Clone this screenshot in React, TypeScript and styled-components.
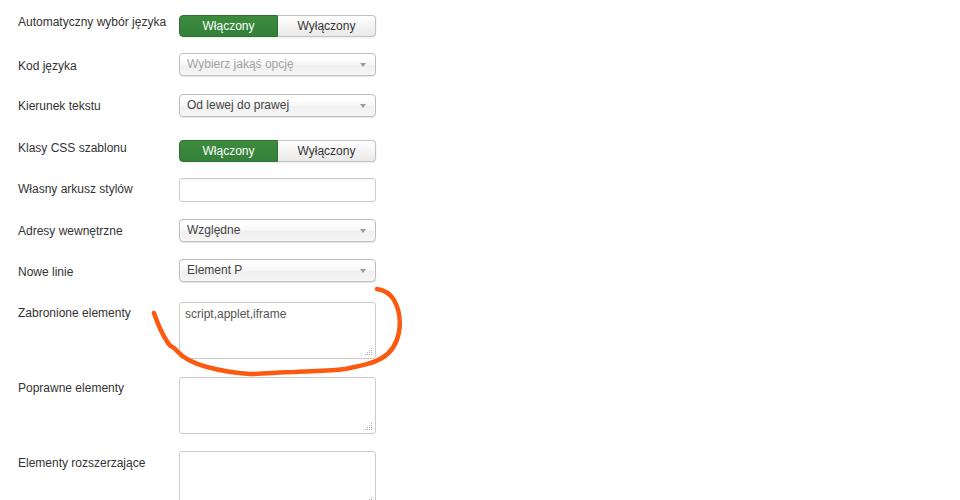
import * as React from "react";
import styled, { createGlobalStyle } from "styled-components";

const GlobalStyle = createGlobalStyle`
  html, body {
    margin: 0;
    padding: 0;
    background: #fff;
  }
  body {
    font-family: "Liberation Sans", Arial, sans-serif;
    font-size: 12px;
    color: #333;
  }
`;

const Page = styled.div`
  position: relative;
  width: 960px;
  height: 500px;
  overflow: hidden;
  padding: 13px 0 0 18px;
  box-sizing: border-box;
`;

const Form = styled.div`
  display: flex;
  flex-direction: column;
`;

const Row = styled.div<{ $pitch: number }>`
  display: grid;
  grid-template-columns: 161px 197px;
  align-items: start;
  height: ${p => p.$pitch}px;
`;

const Label = styled.label<{ $offset: number }>`
  padding-top: ${p => p.$offset}px;
  line-height: 18px;
  font-size: 12px;
  color: #333;
  white-space: nowrap;
`;

const Control = styled.div<{ $offset: number }>`
  margin-top: ${p => p.$offset}px;
  position: relative;
`;

const Toggle = styled.div`
  display: flex;
  height: 22px;
  border-radius: 4px;
  box-shadow: 0 1px 2px rgba(0, 0, 0, 0.08);
`;

const ToggleButton = styled.button<{ $active: boolean }>`
  flex: 1;
  margin: 0;
  padding: 0;
  font-family: "Liberation Sans", Arial, sans-serif;
  font-size: 12px;
  line-height: 20px;
  text-align: center;
  cursor: pointer;
  border: 1px solid ${p => (p.$active ? "#2f6f2f" : "#c2c2c2")};
  background: ${p =>
    p.$active
      ? "linear-gradient(#3d8b3d, #33803a)"
      : "linear-gradient(#ffffff, #e9e9e9)"};
  color: ${p => (p.$active ? "#fff" : "#333")};
  &:first-child {
    border-radius: 4px 0 0 4px;
  }
  &:last-child {
    border-left: none;
    border-radius: 0 4px 4px 0;
  }
`;

const Select = styled.div<{ $placeholder?: boolean }>`
  height: 23px;
  box-sizing: border-box;
  border: 1px solid #bdbdbd;
  border-radius: 4px;
  background: linear-gradient(#ffffff 20%, #f7f7f7 50%, #f0f0f0 52%, #f5f5f5 100%);
  box-shadow: inset 0 0 3px #fff, 0 1px 1px rgba(0, 0, 0, 0.1);
  padding: 0 24px 0 7px;
  line-height: 21px;
  font-size: 12px;
  color: ${p => (p.$placeholder ? "#a3a3a3" : "#444")};
  position: relative;
`;

const Arrow = styled.span`
  position: absolute;
  right: 9px;
  top: 9px;
  width: 0;
  height: 0;
  border-left: 3px solid transparent;
  border-right: 3px solid transparent;
  border-top: 4px solid #9a9a9a;
`;

const TextInput = styled.input`
  display: block;
  width: 197px;
  height: 24px;
  box-sizing: border-box;
  border: 1px solid #ccc;
  border-radius: 3px;
  background: #fff;
  box-shadow: inset 0 1px 1px rgba(0, 0, 0, 0.04);
  padding: 3px 6px;
  font-family: "Liberation Sans", Arial, sans-serif;
  font-size: 12px;
`;

const TextArea = styled.textarea<{ $height: number }>`
  display: block;
  width: 197px;
  height: ${p => p.$height}px;
  box-sizing: border-box;
  border: 1px solid #ccc;
  border-radius: 3px;
  background: #fff;
  padding: 2px 5px;
  margin: 0;
  resize: none;
  font-family: "Liberation Sans", Arial, sans-serif;
  font-size: 12px;
  line-height: 18px;
  color: #555;
`;

const Grip = styled.svg`
  position: absolute;
  right: 3px;
  bottom: 3px;
`;

const Annotation = styled.svg`
  position: absolute;
  left: 0;
  top: 0;
  pointer-events: none;
`;

const ResizeGrip = () => (
  <Grip width="8" height="8" viewBox="0 0 8 8">
    {[
      [6, 0],
      [4, 2],
      [6, 2],
      [2, 4],
      [4, 4],
      [6, 4],
      [0, 6],
      [2, 6],
      [4, 6],
      [6, 6],
    ].map(([x, y], i) => (
      <rect key={i} x={x} y={y} width="1" height="1" fill="#a8a8a8" />
    ))}
  </Grip>
);

const Switch = () => (
  <Toggle>
    <ToggleButton $active>Włączony</ToggleButton>
    <ToggleButton $active={false}>Wyłączony</ToggleButton>
  </Toggle>
);

const Dropdown: React.FC<{ value: string; placeholder?: boolean }> = ({
  value,
  placeholder,
}) => (
  <Select $placeholder={placeholder}>
    {value}
    <Arrow />
  </Select>
);

const Area: React.FC<{ value?: string; height: number }> = ({
  value,
  height,
}) => (
  <>
    <TextArea $height={height} defaultValue={value} />
    <ResizeGrip />
  </>
);

export default function App() {
  return (
    <Page>
      <GlobalStyle />
      <Form>
        <Row $pitch={40}>
          <Label $offset={0}>Automatyczny wybór języka</Label>
          <Control $offset={2}>
            <Switch />
          </Control>
        </Row>
        <Row $pitch={41}>
          <Label $offset={4}>Kod języka</Label>
          <Control $offset={0}>
            <Dropdown value="Wybierz jakąś opcję" placeholder />
          </Control>
        </Row>
        <Row $pitch={45}>
          <Label $offset={3}>Kierunek tekstu</Label>
          <Control $offset={0}>
            <Dropdown value="Od lewej do prawej" />
          </Control>
        </Row>
        <Row $pitch={39}>
          <Label $offset={0}>Klasy CSS szablonu</Label>
          <Control $offset={1}>
            <Switch />
          </Control>
        </Row>
        <Row $pitch={41}>
          <Label $offset={2}>Własny arkusz stylów</Label>
          <Control $offset={0}>
            <TextInput />
          </Control>
        </Row>
        <Row $pitch={40}>
          <Label $offset={3}>Adresy wewnętrzne</Label>
          <Control $offset={0}>
            <Dropdown value="Względne" />
          </Control>
        </Row>
        <Row $pitch={43}>
          <Label $offset={4}>Nowe linie</Label>
          <Control $offset={0}>
            <Dropdown value="Element P" />
          </Control>
        </Row>
        <Row $pitch={75}>
          <Label $offset={2}>Zabronione elementy</Label>
          <Control $offset={0}>
            <Area value="script,applet,iframe" height={57} />
          </Control>
        </Row>
        <Row $pitch={74}>
          <Label $offset={2}>Poprawne elementy</Label>
          <Control $offset={0}>
            <Area height={57} />
          </Control>
        </Row>
        <Row $pitch={74}>
          <Label $offset={3}>Elementy rozszerzające</Label>
          <Control $offset={0}>
            <Area height={57} />
          </Control>
        </Row>
      </Form>
      <Annotation width="960" height="500" viewBox="0 0 960 500">
        <path
          d="M154 313 C157 322 162 334 168 343 C171 348 173 346 176 350 C182 357 192 363 207 367 C222 371 235 373 250 374 C265 374 280 372 295 372 C315 371 330 371 345 369 C360 366 372 364 382 358 C392 352 397 343 399 332 C401 320 399 309 394 300 C390 293 384 290 377 289"
          fill="none"
          stroke="#fb5a10"
          strokeWidth="4.5"
          strokeLinecap="round"
          strokeLinejoin="round"
        />
      </Annotation>
    </Page>
  );
}
